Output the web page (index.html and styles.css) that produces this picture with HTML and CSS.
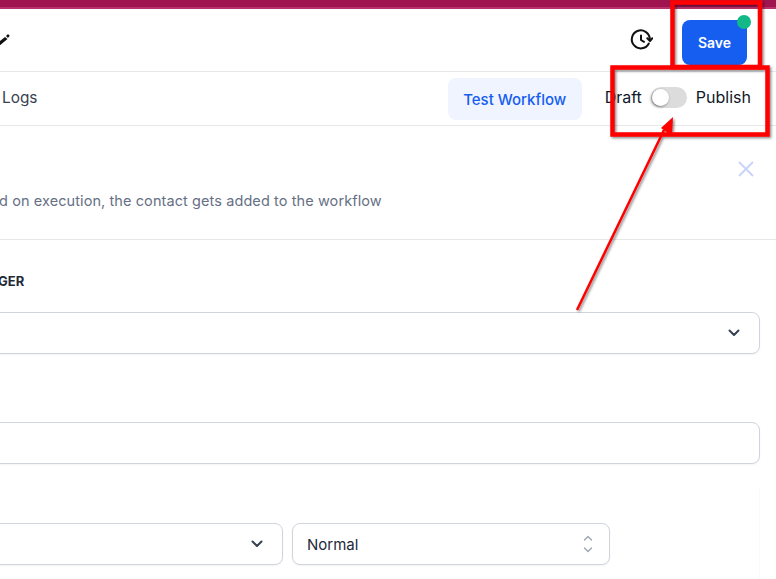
FILE: index.html
```html
<!DOCTYPE html>
<html lang="en">
<head>
<meta charset="utf-8">
<title>Workflow</title>
<link rel="stylesheet" href="styles.css">
</head>
<body>
<div class="page">
  <div class="topbar"></div>
  <header class="header">
    <svg class="pencil" viewBox="0 0 12 12" width="12" height="12"><path d="M-3 12 L7 4 L9.500 6 L0 14Z M8 3 L9.500 1.400 Q10 1 10.500 1.400 L11.400 2.300 Q11.800 2.800 11.300 3.300 L10 5Z" fill="#111"/></svg>
    <div class="header-right">
      <svg class="history" viewBox="0 0 24 24" width="24" height="24" fill="none" stroke="#111" stroke-width="2" stroke-linecap="round" stroke-linejoin="round"><path d="M19.800 15.500A9 9 0 1 1 20.800 11"/><path d="M12 7.500V12l3 1.800"/><path d="M18.300 10.300l2.700 2.700 2.400-2.800"/></svg>
      <button class="save">Save<span class="dot"></span></button>
    </div>
  </header>
  <nav class="tabs">
    <span class="tab">Logs</span>
    <div class="tabs-right">
      <button class="test">Test Workflow</button>
      <div class="publish">
        <span>Draft</span>
        <span class="toggle"><span class="knob"></span></span>
        <span>Publish</span>
      </div>
    </div>
  </nav>
  <section class="intro">
    <p class="desc">d on execution, the contact gets added to the workflow</p>
    <svg class="close" viewBox="0 0 16 16" width="16" height="16" fill="none" stroke="#c9d3f8" stroke-width="1.800"><path d="M1 1L15 15M15 1L1 15"/></svg>
  </section>
  <main class="form">
    <label class="label">GER</label>
    <div class="field field-select">
      <svg class="chev" viewBox="0 0 12 8" width="12" height="8" fill="none" stroke="#374151" stroke-width="2" stroke-linecap="round" stroke-linejoin="round"><path d="M1.500 1.500L6 6l4.500-4.500"/></svg>
    </div>
    <div class="field field-input"></div>
    <div class="card">
      <div class="field field-half">
        <svg class="chev" viewBox="0 0 12 8" width="12" height="8" fill="none" stroke="#374151" stroke-width="2" stroke-linecap="round" stroke-linejoin="round"><path d="M1.500 1.500L6 6l4.500-4.500"/></svg>
      </div>
      <div class="field field-normal">
        <span>Normal</span>
        <svg class="updown" viewBox="0 0 10 20" width="10" height="20" fill="none" stroke="#9ca3af" stroke-width="1.300" stroke-linecap="round" stroke-linejoin="round"><path d="M1.500 6L5 2.500 8.500 6M1.500 14L5 17.500 8.500 14"/></svg>
      </div>
    </div>
  </main>
  <svg class="marks" viewBox="0 0 776 579" width="776" height="579" fill="none">
    <defs><filter id="sh" x="-10%" y="-10%" width="120%" height="120%"><feDropShadow dx="1.500" dy="1.500" stdDeviation="1.200" flood-color="#000" flood-opacity=".45"/></filter></defs>
    <g filter="url(#sh)">
      <path d="M672.500 2.500H760V67H672.500Z" stroke="#fe0000" stroke-width="4.500"/>
      <path d="M612.500 67.500H767.500V134.500H612.500Z" stroke="#fe0000" stroke-width="4.500"/>
      <path d="M577 310L664 130" stroke="#fe0000" stroke-width="2.500"/>
      <path d="M673 117L661 128 672 136Z" fill="#fe0000"/>
    </g>
  </svg>
</div>
</body>
</html>
```
FILE: styles.css
```css
* { box-sizing: border-box; }
html, body { margin: 0; padding: 0; }
body { font-family: Inter, "Noto Sans", sans-serif; background: #fff; color: #111827; }
.page { position: relative; width: 776px; height: 579px; overflow: hidden; background: #fff; display: flex; flex-direction: column; }
.topbar { height: 9px; background: #a0144f; border-bottom: 2px solid #b8336d; flex: none; }
.header { height: 63px; flex: none; border-bottom: 1px solid #e5e7eb; display: flex; align-items: center; justify-content: space-between; }
.pencil { display: block; margin: -2px 0 0 -2px; overflow: visible; }
.header-right { display: flex; align-items: center; gap: 29px; padding-right: 29px; }
.history { display: block; }
.save { position: relative; width: 65px; height: 45px; margin-top: 4px; border: 0; border-radius: 8px; background: #155eef; color: #fff; font: 600 14px Inter, sans-serif; padding: 0; }
.dot { position: absolute; top: -5px; right: -4px; width: 14px; height: 14px; border-radius: 50%; background: #12b886; }
.tabs { height: 54px; flex: none; border-bottom: 1px solid #e5e7eb; display: flex; align-items: center; justify-content: space-between; padding-left: 2px; }
.tab { font-size: 15.400px; color: #374151; margin-top: -3px; }
.tabs-right { display: flex; align-items: center; gap: 23px; padding-right: 25px; }
.test { width: 134px; height: 42px; border: 0; border-radius: 8px; background: #eff4ff; color: #155eef; font: 500 15px Inter, sans-serif; padding: 2px 0 0; }
.publish { display: flex; align-items: center; gap: 9px; font-size: 16px; color: #101828; margin-top: -3px; }
.toggle { display: block; width: 36px; height: 21px; border-radius: 11px; background: #dcdcdc; position: relative; }
.knob { position: absolute; left: 1px; top: 2px; width: 17px; height: 17px; border-radius: 50%; background: #fff; box-shadow: -1px 1px 3px rgba(0,0,0,.45); }
.intro { height: 114px; flex: none; border-bottom: 1px solid #e5e7eb; display: flex; align-items: flex-start; justify-content: space-between; padding: 65px 21px 0 0; position: relative; }
.desc { margin: 0 0 0 -1px; font-size: 14.500px; letter-spacing: .09px; line-height: 20px; color: #667085; }
.close { position: absolute; top: 35px; right: 22px; }
.form { flex: 1; padding: 32px 16px 0 0; display: flex; flex-direction: column; }
.label { font-size: 13px; font-weight: 700; line-height: 18px; color: #1f2937; margin-left: -2px; }
.field { height: 42px; background: #fff; border: 1px solid #d0d5dd; border-radius: 8px; box-shadow: 0 1px 2px rgba(16,24,40,.05); display: flex; align-items: center; justify-content: flex-end; padding: 0 19px; flex: none; }
.field-select { margin: 22px 0 0 -10px; }
.field-input { margin: 68px 0 0 -10px; }
.card { display: flex; gap: 9px; margin: 23px 0 0 -10px; padding-top: 36px; flex: 1; border-right: 1px solid #fafafb; }
.field-half { width: 293px; padding-right: 19px; }
.field-normal { width: 318px; justify-content: space-between; padding: 0 16px 0 14px; font-size: 15px; color: #1d2939; }
.updown { display: block; }
.chev { display: block; }
.marks { position: absolute; left: 0; top: 0; pointer-events: none; }
```
